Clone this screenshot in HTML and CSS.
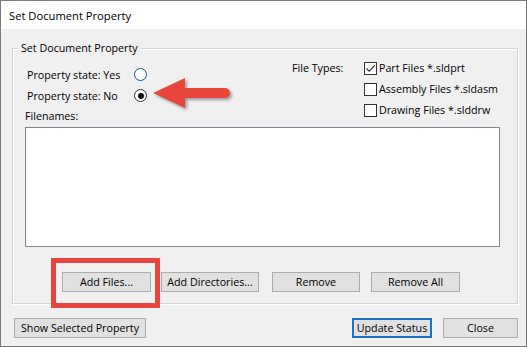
FILE: index.html
```html
<!DOCTYPE html>
<html lang="en">
<head>
    <meta charset="UTF-8">
    <title>Set Document Property</title>
    <link rel="stylesheet" href="styles.css">
</head>
<body>
    <div class="dialog">
        <div class="titlebar">Set Document Property</div>

        <div class="content">
            <div class="group">
                <div class="group-title">Set Document Property</div>

                <div class="top">
                    <div class="state-col">
                        <div class="row">
                            <span class="state-label">Property state: Yes</span>
                            <span class="radio focus"></span>
                        </div>
                        <div class="row">
                            <span class="state-label">Property state: No</span>
                            <span class="radio checked"></span>
                        </div>
                        <div class="filenames-label">Filenames:</div>
                    </div>

                    <div class="types-col">
                        <div class="types-label">File Types:</div>
                        <div class="types-list">
                            <div class="check-row">
                                <span class="checkbox">
                                    <svg width="11" height="11" viewBox="0 0 11 11"><path d="M1.5 5.5 L4.2 8.2 L9.8 2.4" fill="none" stroke="#333" stroke-width="1.2"/></svg>
                                </span>
                                Part Files *.sldprt
                            </div>
                            <div class="check-row"><span class="checkbox"></span>Assembly Files *.sldasm</div>
                            <div class="check-row"><span class="checkbox"></span>Drawing Files *.slddrw</div>
                        </div>
                    </div>
                </div>

                <div class="file-list"></div>

                <div class="group-buttons">
                    <button class="btn-add">Add Files...</button>
                    <button class="btn-dirs">Add Directories...</button>
                    <button class="btn-remove">Remove</button>
                    <button class="btn-remove-all">Remove All</button>
                </div>
            </div>

            <div class="footer">
                <button class="btn-show">Show Selected Property</button>
                <div class="footer-right">
                    <button class="btn-update default">Update Status</button>
                    <button class="btn-close">Close</button>
                </div>
            </div>
        </div>

        <!-- annotations -->
        <svg class="arrow" width="100" height="48" viewBox="0 0 100 48">
            <path d="M8 23 L40 8 L40 18 L80 18 A5 5 0 0 1 80 28 L40 28 L40 38 Z" fill="#e8453c"/>
        </svg>
        <div class="highlight"></div>
    </div>
</body>
</html>
```

FILE: styles.css
```css
body {
    margin: 0;
    font-family: "Open Sans", "Noto Sans", sans-serif;
    font-size: 10.7px;
    color: #000;
}

.dialog {
    position: relative;
    width: 527px;
    height: 347px;
    box-sizing: border-box;
    border: 1px solid #7a7a7a;
    background: #f0f0f0;
    overflow: hidden;
}

.titlebar {
    height: 28px;
    line-height: 29px;
    padding-left: 8px;
    background: #fff;
    font-size: 11.2px;
}

.content {
    padding: 0 8px 0 11px;
}

.group {
    margin-top: 19px;
    height: 256px;
    box-sizing: border-box;
    border: 1px solid #d5d5d5;
    box-shadow: 1px 1px 0 #fff, inset 1px 1px 0 #fff;
}

.group-title {
    width: fit-content;
    margin: -9px 0 0 5px;
    padding: 0 3px;
    line-height: 16px;
    background: #f0f0f0;
}

.top {
    display: flex;
    margin-top: 4px;
}

.state-col {
    width: 279px;
    box-sizing: border-box;
    padding: 4px 0 0 14px;
}

.row {
    display: flex;
    align-items: center;
    height: 21px;
}

.state-label {
    width: 107px;
}

.radio {
    width: 13px;
    height: 13px;
    box-sizing: border-box;
    border: 1px solid #333;
    border-radius: 50%;
    background: #fff;
    display: flex;
    align-items: center;
    justify-content: center;
}

.radio.focus {
    border-color: #1d4c82;
}

.radio.checked::after {
    content: "";
    width: 6px;
    height: 6px;
    border-radius: 50%;
    background: #111;
}

.filenames-label {
    margin: 2px 0 0 -2px;
    line-height: 16px;
}

.types-col {
    display: flex;
}

.types-label {
    width: 72px;
    line-height: 16px;
}

.check-row {
    display: flex;
    align-items: flex-start;
    height: 21px;
    line-height: 16px;
}

.checkbox {
    width: 13px;
    height: 13px;
    box-sizing: border-box;
    margin: 2px 2px 0 0;
    border: 1px solid #333;
    background: #fff;
    display: flex;
}

.file-list {
    margin: 3px 0 0 12px;
    width: 475px;
    height: 120px;
    box-sizing: border-box;
    border: 1px solid #828790;
    background: #fff;
}

.group-buttons {
    display: flex;
    gap: 10px;
    margin-top: 25px;
    padding-left: 49px;
}

button {
    height: 20px;
    padding: 0;
    box-sizing: border-box;
    border: 1px solid #adadad;
    background: #e1e1e1;
    font-family: inherit;
    font-size: inherit;
    color: #000;
}

button.default {
    border: 2px solid #1a74c9;
}

.btn-add { width: 89px; }
.btn-dirs { width: 98px; }
.btn-remove { width: 88px; margin-left: 3px; }
.btn-remove-all { width: 89px; margin-left: 1px; }

.footer {
    display: flex;
    justify-content: space-between;
    margin-top: 14px;
    padding-left: 2px;
}

.footer-right {
    display: flex;
    gap: 11px;
}

.btn-show { width: 132px; }
.btn-update { width: 80px; }
.btn-close { width: 75px; }

.arrow {
    position: absolute;
    left: 144px;
    top: 69px;
    filter: drop-shadow(2px 2px 1.5px rgba(0, 0, 0, 0.35));
}

.highlight {
    position: absolute;
    left: 50px;
    top: 257px;
    width: 109px;
    height: 50px;
    box-sizing: border-box;
    border: 5px solid #e8453c;
}
```
